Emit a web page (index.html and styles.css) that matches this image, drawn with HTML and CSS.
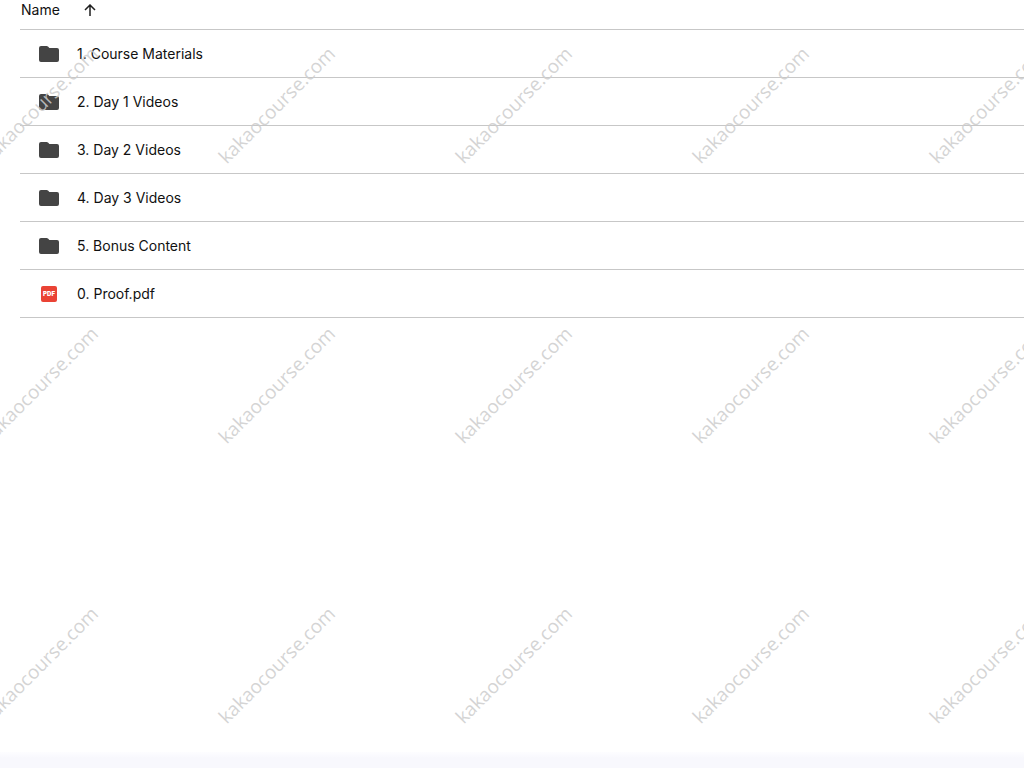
FILE: index.html
```html
<!DOCTYPE html>
<html lang="en">
<head>
    <meta charset="UTF-8">
    <meta name="viewport" content="width=device-width, initial-scale=1">
    <title>Course files</title>
    <link rel="stylesheet" href="styles.css">
</head>
<body>
    <!-- Shared icons -->
    <svg class="sprite" aria-hidden="true">
        <symbol id="icon-folder" viewBox="0 0 20 16">
            <path d="M2 0h5.600c.5 0 1 .2 1.400.6L10.400 2H18a2 2 0 0 1 2 2v10a2 2 0 0 1-2 2H2a2 2 0 0 1-2-2V2a2 2 0 0 1 2-2z"/>
        </symbol>
    </svg>

    <main class="files">
        <table class="file-table">
            <thead>
                <tr>
                    <th aria-sort="ascending">
                        <button type="button" class="sort-button">
                            Name
                            <svg class="sort-arrow" viewBox="0 0 12 12" aria-hidden="true">
                                <path d="M6 12V1M1 6l5-5 5 5"/>
                            </svg>
                        </button>
                    </th>
                </tr>
            </thead>
            <tbody>
                <tr>
                    <td>
                        <a href="#" class="file">
                            <span class="file-icon"><svg class="folder"><use href="#icon-folder"/></svg></span>
                            1. Course Materials
                        </a>
                    </td>
                </tr>
                <tr>
                    <td>
                        <a href="#" class="file">
                            <span class="file-icon"><svg class="folder"><use href="#icon-folder"/></svg></span>
                            2. Day 1 Videos
                        </a>
                    </td>
                </tr>
                <tr>
                    <td>
                        <a href="#" class="file">
                            <span class="file-icon"><svg class="folder"><use href="#icon-folder"/></svg></span>
                            3. Day 2 Videos
                        </a>
                    </td>
                </tr>
                <tr>
                    <td>
                        <a href="#" class="file">
                            <span class="file-icon"><svg class="folder"><use href="#icon-folder"/></svg></span>
                            4. Day 3 Videos
                        </a>
                    </td>
                </tr>
                <tr>
                    <td>
                        <a href="#" class="file">
                            <span class="file-icon"><svg class="folder"><use href="#icon-folder"/></svg></span>
                            5. Bonus Content
                        </a>
                    </td>
                </tr>
                <tr>
                    <td>
                        <a href="#" class="file">
                            <span class="file-icon"><span class="pdf">PDF</span></span>
                            0. Proof.pdf
                        </a>
                    </td>
                </tr>
            </tbody>
        </table>
    </main>
    <div class="bottom-bar"></div>

    <!-- Watermark over the whole page -->
    <div class="watermark" aria-hidden="true">
        <span>kakaocourse.com</span>
        <span>kakaocourse.com</span>
        <span>kakaocourse.com</span>
        <span>kakaocourse.com</span>
        <span>kakaocourse.com</span>
        <span>kakaocourse.com</span>
        <span>kakaocourse.com</span>
        <span>kakaocourse.com</span>
        <span>kakaocourse.com</span>
        <span>kakaocourse.com</span>
        <span>kakaocourse.com</span>
        <span>kakaocourse.com</span>
        <span>kakaocourse.com</span>
        <span>kakaocourse.com</span>
        <span>kakaocourse.com</span>
    </div>
</body>
</html>
```
FILE: styles.css
```css
* {
    box-sizing: border-box;
}
body {
    position: relative;
    display: flex;
    flex-direction: column;
    min-height: 100vh;
    margin: 0;
    overflow-x: hidden;
    background-color: #fff;
    color: #111;
    font-family: Inter, Roboto, sans-serif;
    font-size: 14px;
    font-weight: 400;
    line-height: 20px;
}
.sprite {
    display: none;
}
.files {
    flex: 1;
    padding-left: 20px;
}
.file-table {
    width: 100%;
    border-collapse: separate;
    border-spacing: 0;
}
th, td {
    padding: 0;
    border-bottom: 1px solid #c7c7c7;
    text-align: left;
}
th {
    height: 30px;
    font-weight: 400;
    vertical-align: top;
}
.sort-button {
    display: flex;
    align-items: center;
    gap: 24px;
    padding: 0 1px;
    border: 0;
    background: none;
    color: inherit;
    font: inherit;
    cursor: pointer;
}
.sort-arrow {
    width: 12px;
    height: 12px;
    fill: none;
    stroke: #1f1f1f;
    stroke-width: 1.5;
}
.file {
    display: flex;
    align-items: center;
    gap: 16px;
    height: 47px;
    padding: 0 17px;
    color: inherit;
    text-decoration: none;
}
.file-icon {
    display: flex;
    justify-content: center;
    width: 24px;
}
.folder {
    width: 20px;
    height: 16px;
    fill: #444;
}
.pdf {
    width: 16px;
    height: 16px;
    border-radius: 2px;
    background-color: #ea4335;
    color: #fff;
    font-size: 6px;
    font-weight: 900;
    line-height: 16px;
    text-align: center;
}
.bottom-bar {
    height: 16px;
    background: linear-gradient(#fdfdff, #f8f8fd 6px);
}
.watermark {
    position: absolute;
    inset: 0;
    display: grid;
    grid-template-columns: repeat(5, 237px);
    grid-auto-rows: 280px;
    place-items: center;
    margin: -35px 0 0 -79px;
    overflow: hidden;
    color: rgba(205, 205, 205, 0.85);
    font-family: "Open Sans", "Noto Sans", sans-serif;
    font-size: 19px;
    font-weight: 400;
    pointer-events: none;
}
.watermark span {
    transform: rotate(-45deg);
}
```
